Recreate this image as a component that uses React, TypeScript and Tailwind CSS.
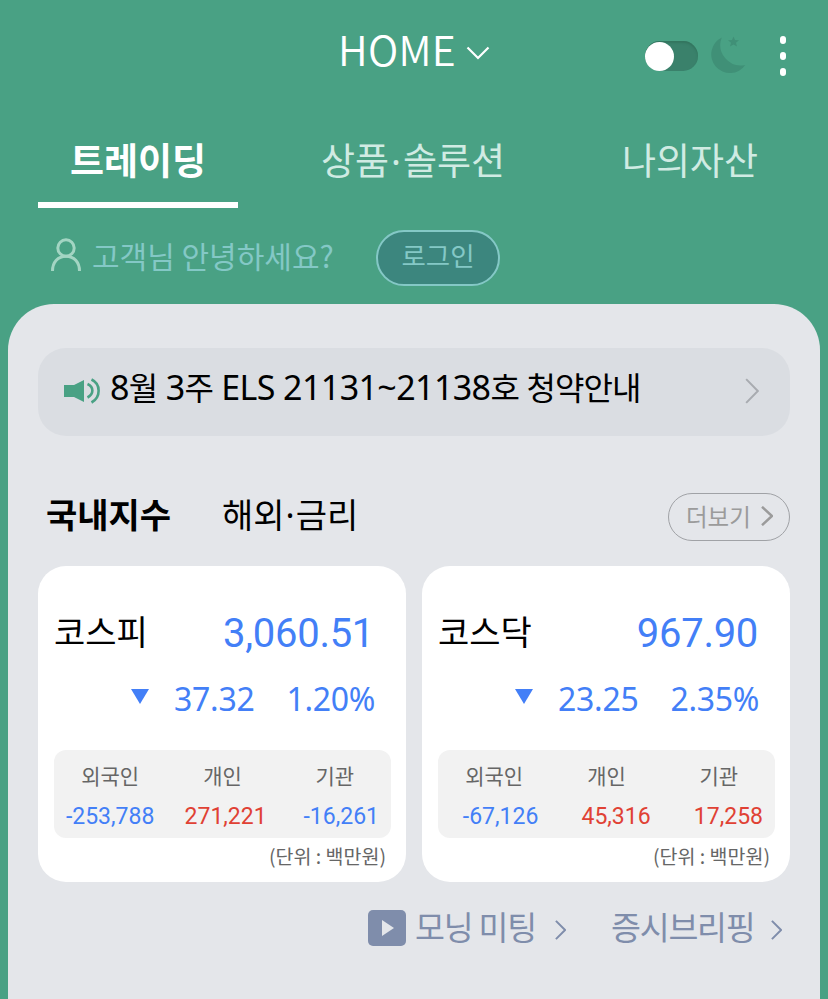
import clsx from "clsx";

const KR = "font-['Noto_Sans_CJK_KR',sans-serif]";
const LATIN = "font-['Noto_Sans','Noto_Sans_CJK_KR',sans-serif]";
const ROBOTO = "font-['Roboto','Noto_Sans_CJK_KR',sans-serif]";

interface Investor {
  label: string;
  value: string;
  up?: boolean;
}

interface MarketIndex {
  name: string;
  price: string;
  change: string;
  rate: string;
  investors: Investor[];
}

const INDICES: MarketIndex[] = [
  {
    name: "코스피",
    price: "3,060.51",
    change: "37.32",
    rate: "1.20%",
    investors: [
      { label: "외국인", value: "-253,788" },
      { label: "개인", value: "271,221", up: true },
      { label: "기관", value: "-16,261" },
    ],
  },
  {
    name: "코스닥",
    price: "967.90",
    change: "23.25",
    rate: "2.35%",
    investors: [
      { label: "외국인", value: "-67,126" },
      { label: "개인", value: "45,316", up: true },
      { label: "기관", value: "17,258", up: true },
    ],
  },
];

function Chevron({ className, width = 2 }: { className?: string; width?: number }) {
  return (
    <svg viewBox="0 0 12 24" fill="none" stroke="currentColor" strokeWidth={width} preserveAspectRatio="none" className={className}>
      <path d="M1 1L11 12L1 23" vectorEffect="non-scaling-stroke" />
    </svg>
  );
}

function TopBar() {
  return (
    <header className="flex h-[112px] items-start pl-[338px] text-white">
      <h1 className={clsx("mt-[28px] w-[117px] whitespace-nowrap text-[41px] font-[350] leading-[40px] tracking-[0.3px]", KR)}>HOME</h1>
      <svg viewBox="0 0 24 14" fill="none" stroke="currentColor" strokeWidth="2.2" className="ml-[11px] mt-[46px] h-[14px] w-6">
        <path d="M1.500 1.500L12 12L22.500 1.500" />
      </svg>
      <div className="ml-[155px] mt-[41px] flex h-[30px] w-[53px] items-center rounded-full bg-[#3a816b] shadow-[inset_0_2px_2px_#33755f]">
        <div className="h-[29px] w-[29px] rounded-full bg-white" />
      </div>
      <svg viewBox="0 0 36 38" fill="#409077" className="ml-[13px] mt-[36px] h-[38px] w-9">
        <path d="M11.500 1.500A18.700 18.700 0 1 0 35 29A20.500 20.500 0 0 1 11.500 1.500Z" transform="translate(-0.700 0)" />
        <path d="M22.500 0.500L24 4L28 4.300L25 6.800L26 10.500L22.500 8.500L19 10.500L20 6.800L17 4.300L21 4Z" />
      </svg>
      <div className="ml-[33px] mt-[36px] flex h-10 w-[6px] flex-col justify-between">
        <i className="h-[8px] rounded-full bg-white" />
        <i className="h-[8px] rounded-full bg-white" />
        <i className="h-[8px] rounded-full bg-white" />
      </div>
    </header>
  );
}

function Tabs() {
  return (
    <nav className={clsx("flex h-24 items-start whitespace-nowrap text-[37px] leading-[46px] text-[#d0ebe3]", KR)}>
      <div className="ml-[38px] mt-[24px] h-[72px] w-[200px] border-b-[6px] border-white text-center font-bold text-white">
        트레이딩
      </div>
      <div className="ml-[83px] mt-[24px] w-[186px]">
        상품<span className={clsx("mx-[2px]", LATIN)}>·</span>솔루션
      </div>
      <div className="ml-[115px] mt-[24px]">나의자산</div>
    </nav>
  );
}

function Greeting() {
  return (
    <div className={clsx("flex h-24 items-start whitespace-nowrap text-[#84c8c6]", KR)}>
      <svg viewBox="0 0 30 34" fill="none" stroke="#a3d5c3" strokeWidth="3" className="ml-[51px] mt-[30px] h-[34px] w-[30px]">
        <circle cx="15" cy="10" r="8.200" />
        <path d="M1.500 33C1.500 24 7 18.200 15 18.200S28.500 24 28.500 33" />
      </svg>
      <p className="ml-[11px] mt-[28px] w-[246px] text-[30px] leading-[38px]">고객님 안녕하세요?</p>
      <button className="ml-[38px] mt-[22px] h-14 w-[124px] rounded-[28px] border-2 border-[#84c8c6] bg-[#3c867e] pb-[6px] text-[26.500px] leading-[46px]">
        로그인
      </button>
    </div>
  );
}

function Notice() {
  const hangul = "text-[32px] tracking-[-0.9px]";
  return (
    <div className="mt-[44px] flex h-[88px] items-start rounded-[28px] bg-[#dadde2]">
      <svg viewBox="0 0 37 28" className="ml-[26px] mt-[29px] h-[28px] w-[37px]" fill="none" stroke="#49a184" strokeWidth="2.6">
        <path d="M0 8H10L20 3V25L10 20H0Z" fill="#49a184" stroke="none" />
        <path d="M23.500 7C30 10 30 17 23.500 20.500M27.500 2.500C37 7 37 20 27.500 25.500" />
      </svg>
      <p className={clsx("ml-[9px] mt-[15px] w-[540px] whitespace-nowrap text-[34px] leading-[48px] tracking-[-0.6px] text-black", LATIN)}>
        8<span className={hangul}>월</span> 3<span className={hangul}>주</span> ELS 21131~21138
        <span className={hangul}>호 청약안내</span>
      </p>
      <Chevron className="ml-[95px] mt-[30px] h-[26px] w-[14px] text-[#a8abb0]" />
    </div>
  );
}

function SectionHead() {
  return (
    <div className={clsx("mt-[57px] flex h-[73px] items-start whitespace-nowrap pl-[8px] text-black", KR)}>
      <h2 className="w-[176px] text-[34px] font-bold leading-[42px]">국내지수</h2>
      <span className="w-[446px] text-[34px] leading-[42px]">
        해외<span className={clsx("mx-px", LATIN)}>·</span>금리
      </span>
      <button className="flex h-12 w-[122px] rounded-[24px] border border-[#a0a2a6] pl-[17px] text-[23.500px] leading-[44px] text-[#9b9b9b]">
        더보기
        <Chevron width={2.5} className="ml-[10px] mt-[12px] h-[20px] w-[12px]" />
      </button>
    </div>
  );
}

function IndexCard({ index }: { index: MarketIndex }) {
  return (
    <section className="h-[316px] w-[368px] whitespace-nowrap rounded-[28px] bg-white px-4">
      <div className="flex h-[106px] items-start justify-between pr-[16px] pt-[42px]">
        <h3 className={clsx("text-[34px] leading-[46px] text-black", KR)}>{index.name}</h3>
        <span className={clsx("text-[40px] leading-[52px] tracking-[-0.300px] text-[#437ff7]", ROBOTO)}>{index.price}</span>
      </div>
      <div className={clsx("flex h-[78px] items-start justify-end pr-[15px] text-[32px] leading-[53px] tracking-[-0.3px] text-[#437ff7]", LATIN)}>
        <svg viewBox="0 0 18 15" fill="currentColor" className="mr-[25px] mt-[17px] h-[15px] w-[18px]">
          <path d="M0 0H18L9 15Z" />
        </svg>
        <span className="mr-[32px]">{index.change}</span>
        <span>{index.rate}</span>
      </div>
      <div className="-mr-px grid h-[88px] grid-cols-3 rounded-xl bg-[#f2f2f2]">
        {index.investors.map((inv) => (
          <div key={inv.label} className="flex flex-col items-center">
            <span className={clsx("mt-[9px] text-[21px] leading-[32px] text-[#666]", KR)}>{inv.label}</span>
            <span className={clsx("mt-[10px] w-full pr-[12px] text-right text-[23px] leading-[32px]", ROBOTO, inv.up ? "text-[#e04134]" : "text-[#437ff7]")}>
              {inv.value}
            </span>
          </div>
        ))}
      </div>
      <p className={clsx("mt-1 pr-[4px] text-right text-[19.500px] leading-[28px] text-[#666]", KR)}>(단위 : 백만원)</p>
    </section>
  );
}

function Links() {
  return (
    <div className={clsx("mt-[20px] flex h-[50px] items-start whitespace-nowrap pl-[330px] text-[32.500px] leading-[47px] tracking-[-1.200px] text-[#7f8dab]", KR)}>
      <svg viewBox="0 0 38 36" className="mt-[8px] h-9 w-[38px]">
        <rect width="38" height="36" rx="5" fill="#7f8dab" />
        <path d="M14 10L26 18L14 26Z" fill="#e4e6ea" />
      </svg>
      <span className="ml-[9px] w-[140px]">모닝 미팅</span>
      <Chevron className="mt-[18px] h-[20px] w-[11px]" />
      <span className="ml-[45px] w-[160px]">증시브리핑</span>
      <Chevron className="mt-[18px] h-[20px] w-[11px]" />
    </div>
  );
}

export default function App() {
  return (
    <div className="h-[999px] w-[828px] overflow-hidden bg-[#49a184]">
      <TopBar />
      <Tabs />
      <Greeting />
      <main className="mx-2 flow-root h-[695px] rounded-t-[46px] bg-[#e4e6ea] px-[30px]">
        <Notice />
        <SectionHead />
        <div className="flex gap-4">
          {INDICES.map((index) => (
            <IndexCard key={index.name} index={index} />
          ))}
        </div>
        <Links />
      </main>
    </div>
  );
}
